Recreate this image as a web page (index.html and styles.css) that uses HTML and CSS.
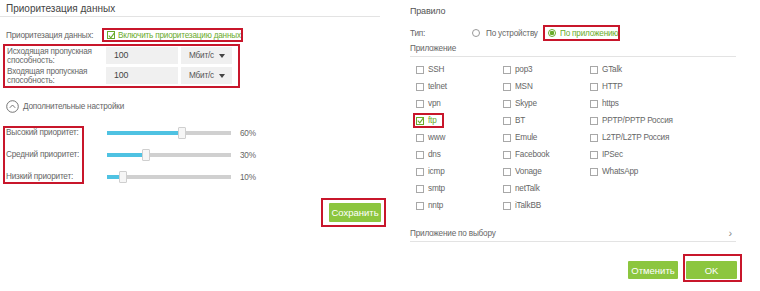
FILE: index.html
```html
<!DOCTYPE html>
<html lang="ru">
<head>
<meta charset="utf-8">
<link rel="stylesheet" href="styles.css">
</head>
<body>
<div class="page">
  <section class="left">
    <div class="title">Приоритезация данных</div>
    <div class="enable-row">
      <span class="lbl-enable">Приоритезация данных:</span>
      <span class="mark enable-box">
        <span class="cb checked"><svg viewBox="0 0 9 9" width="9" height="9"><path d="M1.8 4.6 L3.8 6.8 L7.6 1.6" fill="none" stroke="#6aab2b" stroke-width="1.1"/></svg></span>
        <span class="green">Включить приоритезацию данных</span>
      </span>
    </div>
    <div class="mark bw">
      <div class="bw-row">
        <div class="bw-lbl">Исходящая пропускная<br>способность:</div>
        <div class="inp">100</div>
        <div class="sel"><span class="sel-txt">Мбит/с</span><span class="arrow"></span></div>
      </div>
      <div class="bw-row">
        <div class="bw-lbl">Входящая пропускная<br>способность:</div>
        <div class="inp">100</div>
        <div class="sel"><span class="sel-txt">Мбит/с</span><span class="arrow"></span></div>
      </div>
    </div>
    <div class="adv">
      <svg class="adv-ico" viewBox="0 0 13 13" width="13" height="13"><circle cx="6.5" cy="6.5" r="5.8" fill="none" stroke="#666" stroke-width="0.9"/><path d="M3.8 7.8 L6.5 5 L9.2 7.8" fill="none" stroke="#666" stroke-width="0.9"/></svg>
      <span>Дополнительные настройки</span>
    </div>
    <div class="prio">
      <div class="mark prio-labels">
        <div class="prio-lbl">Высокий приоритет:</div>
        <div class="prio-lbl">Средний приоритет:</div>
        <div class="prio-lbl">Низкий приоритет:</div>
      </div>
      <div class="prio-sliders">
        <div class="sl-row"><div class="track"><div class="fill" style="width:74px"></div><div class="thumb" style="left:71px"></div></div><span class="pct">60%</span></div>
        <div class="sl-row"><div class="track"><div class="fill" style="width:38px"></div><div class="thumb" style="left:35px"></div></div><span class="pct">30%</span></div>
        <div class="sl-row"><div class="track"><div class="fill" style="width:15px"></div><div class="thumb" style="left:12px"></div></div><span class="pct">10%</span></div>
      </div>
    </div>
    <div class="mark save-box"><button class="btn save">Сохранить</button></div>
  </section>

  <section class="right">
    <div class="r-title">Правило</div>
    <div class="type-row">
      <span class="type-lbl">Тип:</span>
      <span class="radio-item"><span class="radio"></span>По устройству</span>
      <span class="mark radio-box"><span class="radio on"></span><span class="green">По приложению</span></span>
    </div>
    <div class="app-head">Приложение</div>
    <div class="apps">
      <div class="app"><span class="cb"></span>SSH</div>
      <div class="app"><span class="cb"></span>pop3</div>
      <div class="app"><span class="cb"></span>GTalk</div>
      <div class="app"><span class="cb"></span>telnet</div>
      <div class="app"><span class="cb"></span>MSN</div>
      <div class="app"><span class="cb"></span>HTTP</div>
      <div class="app"><span class="cb"></span>vpn</div>
      <div class="app"><span class="cb"></span>Skype</div>
      <div class="app"><span class="cb"></span>https</div>
      <div class="app"><span class="mark ftp-box"><span class="cb checked"><svg viewBox="0 0 9 9" width="9" height="9"><path d="M1.8 4.6 L3.8 6.8 L7.6 1.6" fill="none" stroke="#6aab2b" stroke-width="1.1"/></svg></span><span class="green">ftp</span></span></div>
      <div class="app"><span class="cb"></span>BT</div>
      <div class="app"><span class="cb"></span>PPTP/PPTP Россия</div>
      <div class="app"><span class="cb"></span>www</div>
      <div class="app"><span class="cb"></span>Emule</div>
      <div class="app"><span class="cb"></span>L2TP/L2TP Россия</div>
      <div class="app"><span class="cb"></span>dns</div>
      <div class="app"><span class="cb"></span>Facebook</div>
      <div class="app"><span class="cb"></span>IPSec</div>
      <div class="app"><span class="cb"></span>icmp</div>
      <div class="app"><span class="cb"></span>Vonage</div>
      <div class="app"><span class="cb"></span>WhatsApp</div>
      <div class="app"><span class="cb"></span>smtp</div>
      <div class="app"><span class="cb"></span>netTalk</div>
      <div class="app"></div>
      <div class="app"><span class="cb"></span>nntp</div>
      <div class="app"><span class="cb"></span>iTalkBB</div>
      <div class="app"></div>
    </div>
    <div class="custom"><span>Приложение по выбору</span><span class="chev">›</span></div>
    <div class="actions">
      <button class="btn cancel">Отменить</button>
      <div class="mark ok-box"><button class="btn ok">OK</button></div>
    </div>
  </section>
</div>
</body>
</html>
```

FILE: styles.css
```css
* { box-sizing: border-box; }
html, body { margin: 0; padding: 0; background: #fff; }
body {
  font-family: "Liberation Sans", Arial, sans-serif;
  font-size: 8.2px;
  letter-spacing: -0.2px;
  color: #666;
  width: 760px;
  height: 291px;
  overflow: hidden;
  white-space: nowrap;
}
.page { display: flex; }
.mark { border: 2px solid #c8162b; }
.green { color: #6aab2b; }

/* left */
.left { width: 390px; flex: none; }
.title {
  width: 380px;
  height: 17px;
  padding: 3px 0 0 6px;
  font-size: 10px;
  letter-spacing: 0;
  line-height: 12px;
  color: #444;
  border-bottom: 1px solid #e3e3e3;
}
.enable-row {
  display: flex;
  align-items: center;
  margin-top: 11px;
  height: 14px;
}
.lbl-enable { width: 102px; padding-left: 6px; }
.enable-box {
  display: flex;
  align-items: center;
  height: 14px;
  width: 141px;
  padding-left: 3px;
  gap: 3px;
}
.cb {
  display: inline-flex;
  align-items: center;
  justify-content: center;
  width: 8px;
  height: 8px;
  border: 1px solid #a8a8a8;
  background: #fff;
  flex: none;
}
.cb svg { flex: none; }
.cb.checked { border-color: #6aab2b; }

.bw {
  margin: 2px 0 0 3px;
  width: 237px;
  height: 44px;
  padding: 1px 0 0 1px;
  display: flex;
  flex-direction: column;
  gap: 3px;
}
.bw-row { display: flex; align-items: center; height: 17px; gap: 3px; }
.bw-lbl { width: 97px; padding-left: 1px; line-height: 9px; }
.inp {
  width: 72px;
  height: 17px;
  background: #f0f0f0;
  padding-left: 8px;
  line-height: 17px;
  font-size: 8.8px;
  color: #444;
}
.sel {
  width: 51px;
  height: 17px;
  background: #f0f0f0;
  display: flex;
  align-items: center;
  padding: 0 7px 0 8px;
  color: #555;
}
.sel-txt { flex: none; }
.arrow {
  margin-left: auto;
  width: 0; height: 0;
  border-left: 3px solid transparent;
  border-right: 3px solid transparent;
  border-top: 4px solid #444;
}
.adv {
  display: flex;
  align-items: center;
  gap: 4px;
  margin-top: 12px;
  padding-left: 6px;
  height: 13px;
}
.adv-ico { flex: none; }
.prio { display: flex; margin-top: 13px; }
.prio-labels {
  margin-left: 3px;
  width: 81px;
  height: 58px;
  padding: 0 0 0 1px;
  display: flex;
  flex-direction: column;
  gap: 12px;
}
.prio-lbl { height: 10px; line-height: 10px; }
.prio-sliders {
  margin-left: 23px;
  padding-top: 2px;
  display: flex;
  flex-direction: column;
  gap: 12px;
}
.sl-row { display: flex; align-items: center; height: 10px; }
.track {
  position: relative;
  width: 124px;
  height: 4px;
  background: #d0d0d0;
  margin-right: 9px;
}
.fill { position: absolute; left: 0; top: 0; bottom: 0; background: #4fc2e2; }
.thumb {
  position: absolute;
  top: -4px;
  width: 8px;
  height: 12px;
  background: #f6f6f6;
  border: 1px solid #cfcfcf;
  border-radius: 1px;
}
.pct { color: #666; }

.btn {
  border: 0;
  background: #8cc63f;
  color: #fff;
  font-family: "Liberation Sans", Arial, sans-serif;
  font-size: 9.5px;
  padding: 0;
  border-radius: 1px;
}
.save-box {
  margin: 14px 0 0 321px;
  width: 65px;
  height: 29px;
  padding: 3px 0 0 6px;
}
.save { width: 52px; height: 19px; }

/* right */
.right { width: 370px; flex: none; padding-left: 20px; }
.r-title { height: 12px; line-height: 12px; margin-top: 5px; font-size: 9px; color: #555; }
.type-row { display: flex; align-items: center; margin-top: 8px; height: 16px; }
.type-lbl { width: 62px; }
.radio-item { display: flex; align-items: center; gap: 6px; width: 71px; }
.radio {
  width: 8px; height: 8px;
  border-radius: 50%;
  border: 1px solid #999;
  background: #fff;
  flex: none;
  display: inline-block;
}
.radio.on { border-color: #6aab2b; background: radial-gradient(circle, #6aab2b 0 2px, #fff 2.5px); }
.radio-box {
  display: flex;
  align-items: center;
  gap: 4px;
  height: 16px;
  width: 77px;
  padding-left: 3px;
}
.app-head { margin-top: 2px; height: 12px; line-height: 12px; }
.apps {
  width: 326px;
  border-top: 1px solid #e3e3e3;
  margin-top: 1px;
  padding: 4px 0 0 6px;
  display: grid;
  grid-template-columns: 87px 87px 1fr;
  grid-auto-rows: 17px;
}
.app { display: flex; align-items: center; gap: 4px; color: #666; }
.ftp-box {
  display: flex;
  align-items: center;
  gap: 4px;
  height: 15px;
  width: 31px;
  margin-left: -3px;
  padding-left: 1px;
}
.custom {
  display: flex;
  justify-content: space-between;
  align-items: center;
  width: 326px;
  margin-top: 13px;
  height: 15px;
  border-bottom: 1px solid #e3e3e3;
  padding-bottom: 2px;
}
.chev { font-size: 11px; color: #888; margin-right: 4px; }
.actions {
  display: flex;
  justify-content: flex-end;
  align-items: flex-start;
  width: 332px;
  margin-top: 12px;
  gap: 5px;
}
.cancel { width: 50px; height: 18px; margin-top: 7px; }
.ok-box { width: 59px; height: 28px; padding: 5px 0 0 1px; }
.ok { width: 51px; height: 18px; }
```
